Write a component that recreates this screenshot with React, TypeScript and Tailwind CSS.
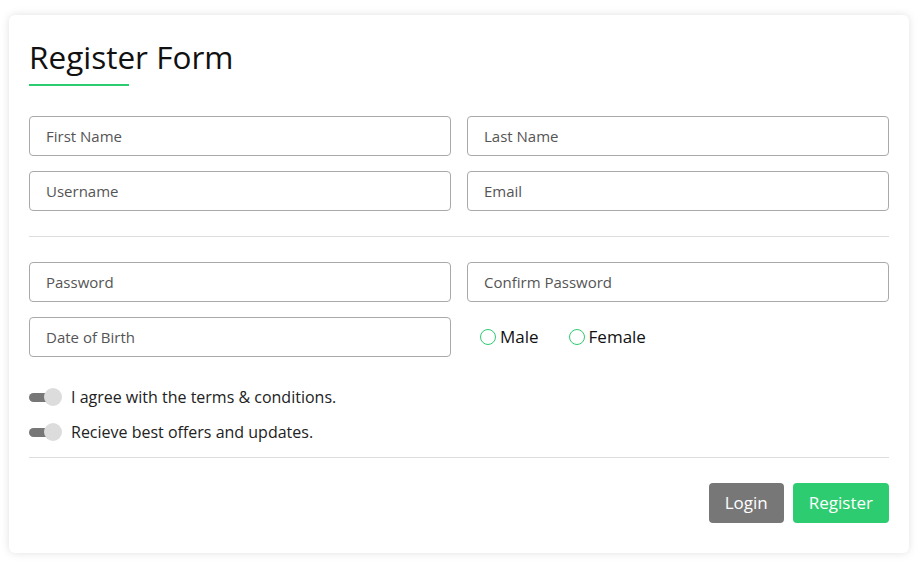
import React from 'react';

const font = { fontFamily: '"Open Sans", "Liberation Sans", sans-serif' };

function Field({ placeholder }: { placeholder: string }) {
  return (
    <input
      placeholder={placeholder}
      className="h-10 w-full rounded border border-[#a9a9a9] px-4 text-[15px] text-[#444] placeholder:text-[#555] outline-none"
    />
  );
}

function Toggle({ label }: { label: string }) {
  return (
    <label className="flex items-center gap-[9px] text-[16px] leading-6 text-[#222]">
      <span className="relative flex h-[18px] w-[33px] items-center">
        <span className="h-[9px] w-[26px] rounded-full bg-[#777]" />
        <span className="absolute right-0 top-0 h-[18px] w-[18px] rounded-full bg-[#dcdcdc]" />
      </span>
      {label}
    </label>
  );
}

function Radio({ label }: { label: string }) {
  return (
    <label className="flex items-center gap-[4px] text-[17px] text-[#111]">
      <span className="h-4 w-4 rounded-full border border-[#2ecc71] bg-white" />
      {label}
    </label>
  );
}

export default function App() {
  return (
    <div className="min-h-screen bg-white pl-[9px] pt-[15px]" style={font}>
      <div className="w-[900px] rounded-md bg-white px-5 pb-[30px] pt-[22px] shadow-[0_0_8px_rgba(0,0,0,0.12)]">
        <h1 className="text-[31.5px] leading-[40px] text-[#111]">Register Form</h1>
        <div className="mt-[7px] h-[2px] w-[100px] bg-[#2ecc71]" />

        <div className="mt-[30px] grid grid-cols-2 gap-x-4 gap-y-[15px]">
          <Field placeholder="First Name" />
          <Field placeholder="Last Name" />
          <Field placeholder="Username" />
          <Field placeholder="Email" />
        </div>

        <div className="my-[25px] h-px bg-[#ddd]" />

        <div className="grid grid-cols-2 gap-x-4 gap-y-[15px]">
          <Field placeholder="Password" />
          <Field placeholder="Confirm Password" />
          <Field placeholder="Date of Birth" />
          <div className="flex items-center gap-[30px] pl-[13px]">
            <Radio label="Male" />
            <Radio label="Female" />
          </div>
        </div>

        <div className="mt-[28px] flex flex-col gap-[11px]">
          <Toggle label="I agree with the terms & conditions." />
          <Toggle label="Recieve best offers and updates." />
        </div>

        <div className="mt-[13px] h-px bg-[#ddd]" />

        <div className="mt-[25px] flex justify-end gap-[9px]">
          <button className="h-10 rounded bg-[#777] px-4 text-[17px] text-white">Login</button>
          <button className="h-10 rounded bg-[#2ecc71] px-4 text-[17px] text-white">Register</button>
        </div>
      </div>
    </div>
  );
}
